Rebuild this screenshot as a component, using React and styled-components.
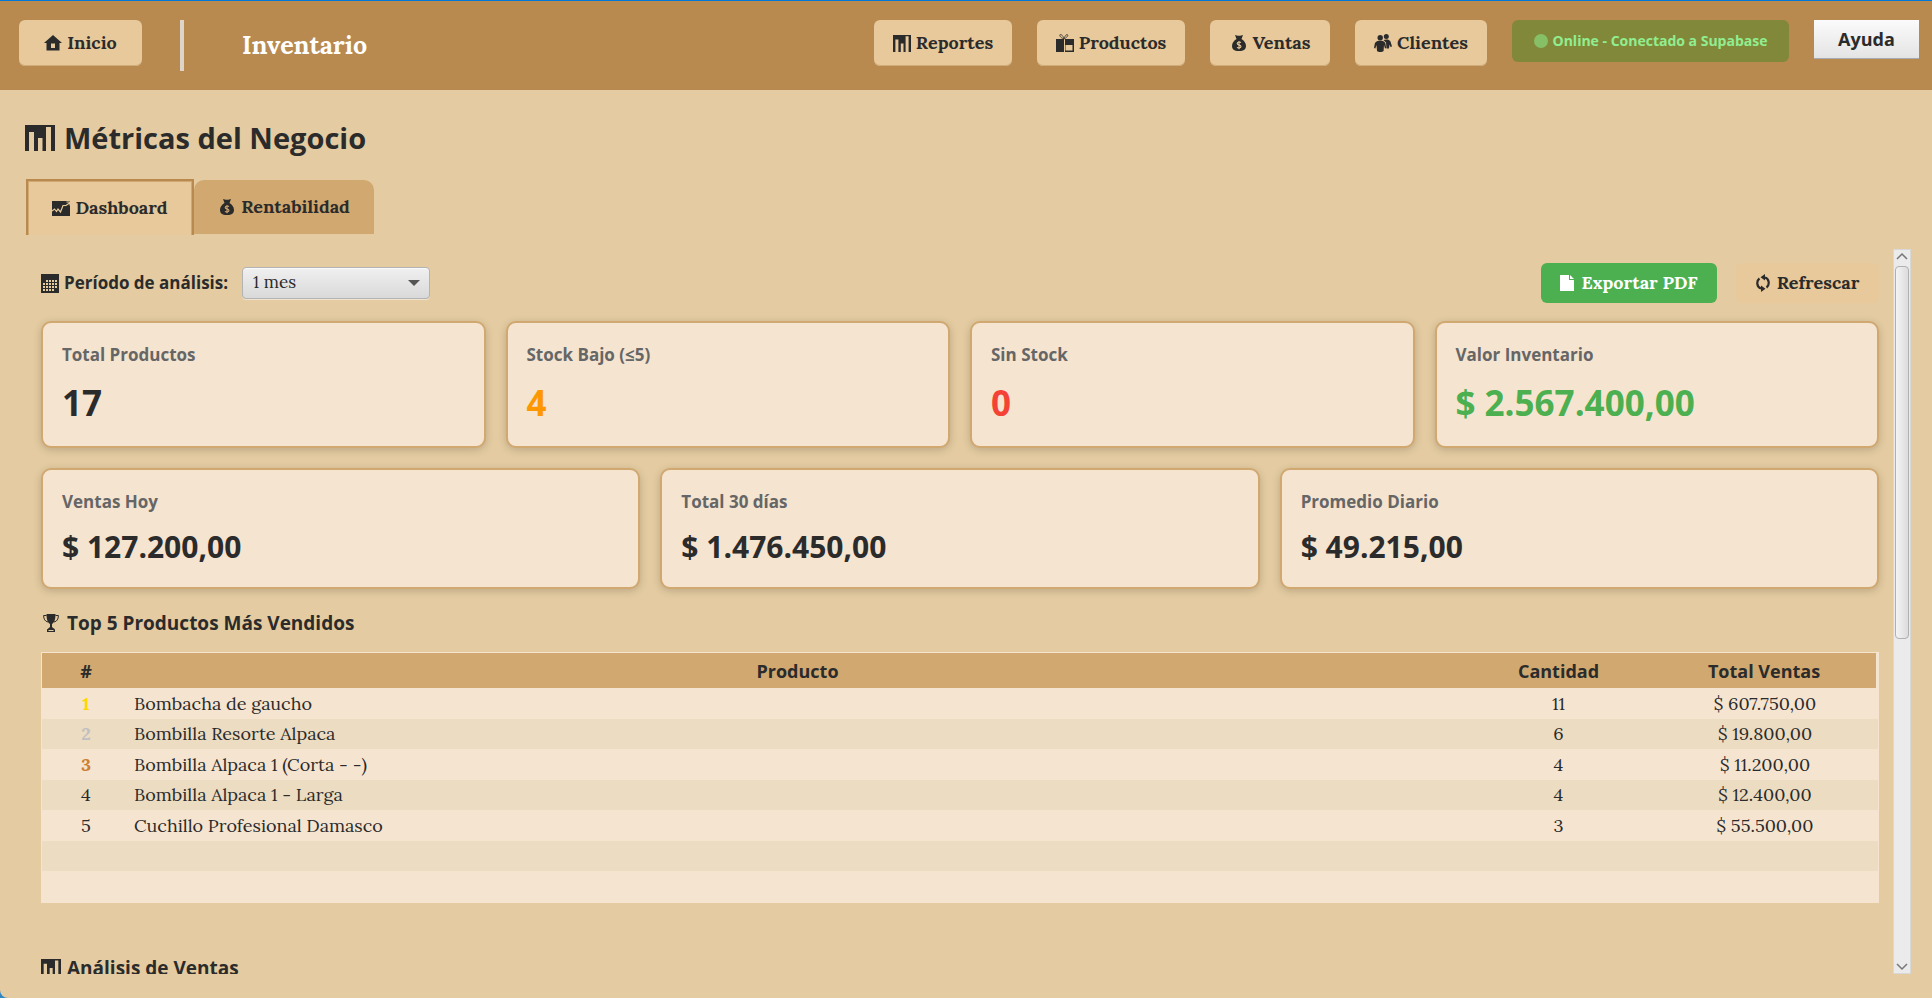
import React from "react";
import styled, { createGlobalStyle, css } from "styled-components";

const serif = '"Lora", "Liberation Serif", serif';
const sans = '"Open Sans", "Noto Sans", sans-serif';

const c = {
  header: "#b88a50",
  page: "#e4cba1",
  button: "#e7c99b",
  tan: "#d0a870",
  card: "#f5e4d0",
  stripe: "#ecdcc2",
  ink: "#2b2b2b",
  muted: "#666666",
  green: "#4caf50",
  orange: "#ff9800",
  red: "#f44336",
};

const GlobalStyle = createGlobalStyle`
  *, *::before, *::after { box-sizing: border-box; }
  html, body, #root { height: 100%; }
  body { margin: 0; background: #2f86c4; color: ${c.ink}; font-family: ${sans}; }
  h1, h2, p { margin: 0; }
  button, select { margin: 0; color: inherit; }
`;

/* ---------- icons ---------- */

const Icon = styled.svg`
  flex: none;
  display: block;
  fill: currentColor;
  width: ${(p) => p.$w || 18}px;
  height: ${(p) => p.$h || 18}px;
`;

const HomeIcon = () => (
  <Icon viewBox="0 0 18 16" $w={18} $h={16} aria-hidden="true">
    <path fillRule="evenodd" d="M9 0 18 8H15.500V15.500H2.500V8H0ZM7 8.500V13H11V8.500Z" />
  </Icon>
);

const ChartIcon = ({ w = 18, h = 17 }) => (
  <Icon viewBox="0 0 30 26" preserveAspectRatio="none" $w={w} $h={h} aria-hidden="true">
    <path fillRule="evenodd" d="M0 0H30V26H26V2H21V26H17.500V13H13V26H9V7H4V26H0Z" />
  </Icon>
);

const GiftIcon = () => (
  <Icon viewBox="0 0 18 18" aria-hidden="true">
    <path fillRule="evenodd" d="M0 5H8V18H0ZM9 5H18V18H9ZM9.500 11V16.500H16.500V11Z" />
    <path d="M8 5C5.500 4 3 2 4 .7 6 0 7.500 3 8 5 8.500 3 10 0 11.500 .7 12.500 2 10 4 8 5" fill="none" stroke="currentColor" strokeWidth=".8" />
  </Icon>
);

const MoneyIcon = ({ sign = c.button }) => (
  <Icon viewBox="-2 0 18 16" $w={18} $h={16} aria-hidden="true">
    <path d="M3 0C5 1 9 1 11 0L9.500 4C12 5.500 14 8 14 11 14 14 12 16 7 16S0 14 0 11C0 8 2 5.500 4.500 4Z" />
    <path d="M9 7.500C8 6.700 5.200 6.700 5.200 8.500 5.200 10.300 9 9.500 9 11.500 9 13.300 6 13.300 5 12.400M7 6V14.200" fill="none" stroke={sign} strokeWidth="1.100" />
  </Icon>
);

const PeopleIcon = () => (
  <Icon viewBox="0 0 18 18" aria-hidden="true">
    <circle cx="12.300" cy="2.600" r="2.500" />
    <path d="M9.500 6C12 5 15.500 5.300 16.500 7.500L18 12.500 16.500 13 15.500 10.500 15 14.500H12.500L12 8.500Z" />
    <circle cx="6.200" cy="3.700" r="2.700" />
    <path d="M.8 9.500C1.800 7 4 6.700 6.200 6.700S10.600 7 11.400 9.500L12.200 14 11 14.500 10 11 9.600 17C8 18.300 4.500 18.300 3 17L2.500 11 1.300 14.500 0 14Z" />
  </Icon>
);

const TrendIcon = () => (
  <Icon viewBox="0 0 18 15" $w={18} $h={15} aria-hidden="true">
    <path d="M0 0H18V15H0Z" />
    <path d="M0 10 2.500 8 4.500 10.500 6 8 8.500 11 11 4.500H14L17.500 2M14.500 1H18V4.500" fill="none" stroke={c.button} strokeWidth="1.200" />
  </Icon>
);

const CalendarIcon = () => (
  <Icon viewBox="0 0 18 19" $w={18} $h={19} aria-hidden="true">
    <path d="M0 0H18V19H0Z" />
    <path
      fill={c.page}
      d="M5 6h2v2H5zM8 6h2v2H8zM11 6h2v2h-2zM14 6h2v2h-2zM2 9h2v2H2zM5 9h2v2H5zM8 9h2v2H8zM11 9h2v2h-2zM14 9h2v2h-2zM2 12h2v2H2zM5 12h2v2H5zM8 12h2v2H8zM11 12h2v2h-2zM14 12h2v2h-2zM2 15h2v2H2zM5 15h2v2H5zM8 15h2v2H8zM11 15h2v2h-2z"
    />
  </Icon>
);

const PageIcon = () => (
  <Icon viewBox="0 0 14 16" $w={14} $h={16} aria-hidden="true">
    <path d="M0 0H9V5H14V16H0ZM10 0 14 4H10Z" />
  </Icon>
);

const RefreshIcon = () => (
  <Icon viewBox="0 0 14 18" $w={14} $h={18} aria-hidden="true">
    <path d="M5 14.500C.5 13 .2 7 3.500 4.500M9 3.500C13.500 5 13.800 11 10.500 13.500" fill="none" stroke="currentColor" strokeWidth="2.200" />
    <path d="M4.500 3.300 9 0V6.500ZM9.500 14.700 5 11.500V18Z" />
  </Icon>
);

const TrophyIcon = () => (
  <Icon viewBox="-2 0 20 18" $w={20} $h={18} aria-hidden="true">
    <path d="M3.500 0H12.500C12.500 6 11 9 9 10V13L12 15.500V18H4V15.500L7 13V10C5 9 3.500 6 3.500 0Z" />
    <path d="M3.500 1.500H.6C.6 5 2 7.500 5 8M12.500 1.500H15.400C15.400 5 14 7.500 11 8" fill="none" stroke="currentColor" strokeWidth="1" />
    <path d="M5.500 16.500H10.500" stroke={c.page} strokeWidth="1" />
  </Icon>
);

/* ---------- shell ---------- */

const Shell = styled.div`
  height: 100vh;
  display: flex;
  flex-direction: column;
  background: ${c.page};
  border-top: 1px solid #0078d7;
  border-bottom-left-radius: 8px;
  overflow: hidden;
`;

const Header = styled.header`
  display: flex;
  align-items: flex-start;
  gap: 25px;
  height: 89px;
  padding: 19px 13px 0 19px;
  background: ${c.header};
`;

const Brand = styled.div`
  display: flex;
  flex: 1;
  align-items: flex-start;
`;

const Divider = styled.span`
  width: 4px;
  height: 51px;
  margin: 0 58px 0 38px;
  background: #ddd5ca;
`;

const BrandName = styled.p`
  font: bold 25px/50px ${serif};
  color: #fff;
`;

const NavButton = styled.button`
  display: flex;
  align-items: center;
  justify-content: center;
  gap: 5px;
  height: 46px;
  min-width: ${(p) => p.$w}px;
  padding: 0;
  border: 0;
  border-radius: 6px;
  background: ${c.button};
  box-shadow: inset 0 -1px #d0ab78;
  font: bold 18px/24px ${serif};
  white-space: nowrap;
`;

const Status = styled.p`
  display: flex;
  align-items: center;
  justify-content: center;
  gap: 5px;
  width: 277px;
  height: 42px;
  border-radius: 6px;
  background: #82883a;
  color: #90ee90;
  font: bold 14px/20px ${sans};
  white-space: nowrap;
`;

const StatusDot = styled.span`
  width: 14px;
  height: 14px;
  border-radius: 50%;
  background: #86bf66;
`;

const HelpButton = styled.button`
  width: 105px;
  height: 39px;
  padding: 0;
  border: 0;
  border-bottom: 1px solid #a9a9b0;
  background: linear-gradient(#fbfbfb, #e4e4e4);
  font: bold 18px/24px ${sans};
`;

const Main = styled.main`
  flex: 1;
  min-height: 0;
  display: flex;
  flex-direction: column;
  padding: 25px 21px 24px 25px;
`;

const PageTitle = styled.h1`
  display: flex;
  align-items: center;
  gap: 9px;
  font: bold 29px/46px ${sans};
`;

const Tabs = styled.div`
  display: flex;
  align-items: flex-end;
  height: 74px;
  padding: 0 1px;
`;

const Tab = styled.button`
  display: flex;
  align-items: center;
  justify-content: center;
  gap: 5px;
  padding: 0;
  border: 0;
  font: bold 18px/24px ${serif};
  ${(p) =>
    p["aria-selected"]
      ? css`
          width: 168px;
          height: 56px;
          border: solid ${c.header};
          border-width: 2px 2px 0;
          background: ${c.button};
          box-shadow: inset 1px 1px ${c.tan}, inset -1px 0 ${c.tan};
        `
      : css`
          width: 180px;
          height: 54px;
          margin-bottom: 1px;
          border-radius: 10px 10px 0 0;
          background: ${c.tan};
        `}
`;

const Panel = styled.div`
  flex: 1;
  min-height: 0;
  display: flex;
  margin-top: 14px;
`;

const Content = styled.div`
  flex: 1;
  min-width: 0;
  padding: 14px 14px 0 16px;
  overflow-y: auto;
  scrollbar-width: none;
`;

/* ---------- scroll bar ---------- */

const ScrollTrack = styled.div`
  display: flex;
  flex-direction: column;
  align-items: center;
  width: 18px;
  padding: 2px 0;
  border: 1px solid #d8d8d8;
  background: #ebebeb;
`;

const ScrollSpace = styled.div`
  flex: 1;
  width: 14px;
  padding: 6px 0;
`;

const ScrollThumb = styled.div`
  height: 54%;
  border: 1px solid #b0b0b0;
  border-radius: 4px;
  background: linear-gradient(90deg, #f4f4f4, #dcdcdc);
`;

const Arrow = ({ d }) => (
  <Icon viewBox="0 0 12 8" $w={12} $h={8} aria-hidden="true">
    <path d={d} fill="none" stroke="#777" strokeWidth="1.500" />
  </Icon>
);

/* ---------- toolbar ---------- */

const Toolbar = styled.div`
  display: flex;
  align-items: center;
  gap: 19px;
  height: 40px;
`;

const PeriodField = styled.div`
  display: flex;
  flex: 1;
  align-items: center;
  gap: 14px;
`;

const PeriodLabel = styled.label`
  display: flex;
  align-items: center;
  gap: 5px;
  font: bold 17px/24px ${sans};
`;

const SelectBox = styled.div`
  display: grid;
  align-items: center;
  width: 188px;

  & > * { grid-area: 1 / 1; }
  & > svg { justify-self: end; margin-right: 10px; pointer-events: none; }
`;

const Select = styled.select`
  appearance: none;
  width: 100%;
  height: 32px;
  padding: 0 30px 2px 10px;
  border: 1px solid #b3b3b3;
  border-radius: 4px;
  background: linear-gradient(#f0f0f0, #d9d9d9);
  box-shadow: inset 0 1px #fafafa, 0 1px #f0e4d0;
  font: 17px/24px ${serif};
`;

const ActionButton = styled.button`
  display: flex;
  align-items: center;
  justify-content: center;
  gap: 7px;
  width: ${(p) => p.$w}px;
  height: 40px;
  padding: 0;
  border: 0;
  border-radius: 6px;
  background: ${(p) => (p.$primary ? c.green : c.button)};
  color: ${(p) => (p.$primary ? "#fff" : c.ink)};
  font: bold 18px/24px ${serif};
`;

/* ---------- cards ---------- */

const CardRow = styled.section`
  display: grid;
  grid-template-columns: repeat(${(p) => p.$columns}, 1fr);
  gap: 20px;
  margin-top: ${(p) => p.$top}px;
`;

const Card = styled.article`
  padding: 18px 19px;
  border: 2px solid ${c.tan};
  border-radius: 10px;
  background: ${c.card};
  box-shadow: 0 2px 8px rgba(0, 0, 0, 0.18);
`;

const CardLabel = styled.p`
  font: bold 17px/28px ${sans};
  color: ${c.muted};
`;

const CardValue = styled.p`
  margin-top: 9px;
  font: bold ${(p) => (p.$large ? "35px/50px" : "30px/44px")} ${sans};
  color: ${(p) => p.$color || c.ink};
`;

const Metric = ({ label, value, color, large }) => (
  <Card>
    <CardLabel>{label}</CardLabel>
    <CardValue $large={large} $color={color}>{value}</CardValue>
  </Card>
);

/* ---------- table ---------- */

const SectionTitle = styled.h2`
  display: flex;
  align-items: center;
  gap: 6px;
  margin-top: ${(p) => p.$top}px;
  font: bold 19px/28px ${sans};
`;

const Table = styled.table`
  width: 100%;
  margin-top: 15px;
  border: 1px solid ${c.card};
  border-collapse: separate;
  border-spacing: 0;
  table-layout: fixed;
  background: ${c.card};
  font: 18px/24px ${serif};

  tbody tr { height: 31px; }
  tbody tr:nth-child(even) { height: 30px; background: ${c.stripe}; }
`;

const Col = styled.col`
  width: ${(p) => p.$w};
`;

const Th = styled.th`
  height: 35px;
  padding: 0;
  background: ${c.tan};
  font: bold 18px/24px ${sans};

  &:last-child { border-right: 2px solid ${c.card}; }
`;

const Td = styled.td`
  padding: 0 4px;
  text-align: ${(p) => (p.$left ? "left" : "center")};
  color: ${(p) => p.$color || "inherit"};
  font-weight: ${(p) => (p.$color ? "bold" : "normal")};
`;

const medals = ["#ffd700", "#c0c0c0", "#cd7f32"];

const products = [
  ["Bombacha de gaucho", "11", "$ 607.750,00"],
  ["Bombilla Resorte Alpaca", "6", "$ 19.800,00"],
  ["Bombilla Alpaca 1 (Corta - -)", "4", "$ 11.200,00"],
  ["Bombilla Alpaca 1 - Larga", "4", "$ 12.400,00"],
  ["Cuchillo Profesional Damasco", "3", "$ 55.500,00"],
];

export default function App() {
  return (
    <Shell>
      <GlobalStyle />
      <Header>
        <Brand>
          <NavButton $w={123}><HomeIcon />Inicio</NavButton>
          <Divider />
          <BrandName>Inventario</BrandName>
        </Brand>
        <NavButton $w={138}><ChartIcon />Reportes</NavButton>
        <NavButton $w={148}><GiftIcon />Productos</NavButton>
        <NavButton $w={120}><MoneyIcon />Ventas</NavButton>
        <NavButton $w={132}><PeopleIcon />Clientes</NavButton>
        <Status><StatusDot />Online - Conectado a Supabase</Status>
        <HelpButton>Ayuda</HelpButton>
      </Header>

      <Main>
        <PageTitle><ChartIcon w={30} h={26} />Métricas del Negocio</PageTitle>
        <Tabs role="tablist">
          <Tab role="tab" aria-selected={true}><TrendIcon />Dashboard</Tab>
          <Tab role="tab" aria-selected={false}><MoneyIcon sign={c.tan} />Rentabilidad</Tab>
        </Tabs>

        <Panel>
          <Content>
            <Toolbar>
              <PeriodField>
                <PeriodLabel htmlFor="period"><CalendarIcon />Período de análisis:</PeriodLabel>
                <SelectBox>
                  <Select id="period" defaultValue="1 mes">
                    <option>1 mes</option>
                  </Select>
                  <Icon viewBox="0 0 12 6" $w={12} $h={6} aria-hidden="true">
                    <path d="M0 0H12L6 6Z" fill="#555" />
                  </Icon>
                </SelectBox>
              </PeriodField>
              <ActionButton $w={176} $primary><PageIcon />Exportar PDF</ActionButton>
              <ActionButton $w={143}><RefreshIcon />Refrescar</ActionButton>
            </Toolbar>

            <CardRow $columns={4} $top={18}>
              <Metric large label="Total Productos" value="17" />
              <Metric large label="Stock Bajo (≤5)" value="4" color={c.orange} />
              <Metric large label="Sin Stock" value="0" color={c.red} />
              <Metric large label="Valor Inventario" value="$ 2.567.400,00" color={c.green} />
            </CardRow>
            <CardRow $columns={3} $top={20}>
              <Metric label="Ventas Hoy" value="$ 127.200,00" />
              <Metric label="Total 30 días" value="$ 1.476.450,00" />
              <Metric label="Promedio Diario" value="$ 49.215,00" />
            </CardRow>

            <SectionTitle $top={20}><TrophyIcon />Top 5 Productos Más Vendidos</SectionTitle>
            <Table>
              <colgroup>
                <Col $w="88px" />
                <Col $w="auto" />
                <Col $w="187px" />
                <Col $w="226px" />
              </colgroup>
              <thead>
                <tr>
                  <Th>#</Th>
                  <Th>Producto</Th>
                  <Th>Cantidad</Th>
                  <Th>Total Ventas</Th>
                </tr>
              </thead>
              <tbody>
                {products.map(([name, quantity, total], i) => (
                  <tr key={name}>
                    <Td $color={medals[i]}>{i + 1}</Td>
                    <Td $left>{name}</Td>
                    <Td>{quantity}</Td>
                    <Td>{total}</Td>
                  </tr>
                ))}
                <tr><Td colSpan={4} /></tr>
                <tr><Td colSpan={4} /></tr>
              </tbody>
            </Table>

            <SectionTitle $top={51}><ChartIcon w={20} h={18} />Análisis de Ventas</SectionTitle>
          </Content>
          <ScrollTrack aria-hidden="true">
            <Arrow d="M1 7 6 2 11 7" />
            <ScrollSpace><ScrollThumb /></ScrollSpace>
            <Arrow d="M1 1 6 6 11 1" />
          </ScrollTrack>
        </Panel>
      </Main>
    </Shell>
  );
}
